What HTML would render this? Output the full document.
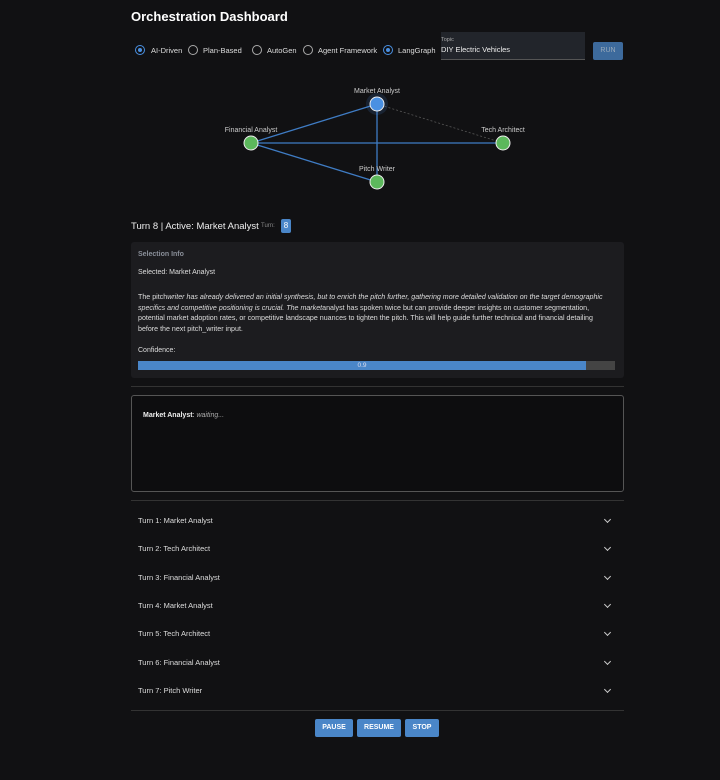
<!DOCTYPE html>
<html><head><meta charset="utf-8"><style>
*{margin:0;padding:0;box-sizing:border-box}
body{width:720px;height:780px;background:#111113;font-family:"Liberation Sans",sans-serif;color:#e6e6e6;position:relative;overflow:hidden}
.a{position:absolute;white-space:nowrap}
.r{position:absolute;width:10px;height:10px;border:1px solid #aaa;border-radius:50%;top:45px}
.r.on{border-color:#4a90e2}
.r.on::after{content:"";position:absolute;left:2px;top:2px;width:4px;height:4px;border-radius:50%;background:#4a90e2}
.lb{font-size:7.5px;top:46px;color:#ddd}
.acc{position:absolute;left:138px;font-size:7.5px;color:#ddd}
.chev{position:absolute;left:605px;width:5px;height:5px;border-right:1px solid #ccc;border-bottom:1px solid #ccc;transform:rotate(45deg)}
.btn{position:absolute;top:719px;height:18px;background:#4a86c8;color:#fff;font-size:7px;font-weight:bold;text-align:center;line-height:18px;border-radius:2px}
</style></head><body>
<div class="a" style="left:131px;top:9px;font-size:13px;font-weight:bold;color:#fff">Orchestration Dashboard</div>
<div class="r on" style="left:135px"></div><div class="a lb" style="left:151px">AI-Driven</div>
<div class="r" style="left:188px"></div><div class="a lb" style="left:203px">Plan-Based</div>
<div class="r" style="left:252px"></div><div class="a lb" style="left:267px">AutoGen</div>
<div class="r" style="left:303px"></div><div class="a lb" style="left:318px">Agent Framework</div>
<div class="r on" style="left:383px"></div><div class="a lb" style="left:398px">LangGraph</div>
<div class="a" style="left:441px;top:32px;width:144px;height:28px;background:#22252b;border-bottom:1px solid #555"></div>
<div class="a" style="left:441px;top:37px;font-size:5.5px;color:#aaa">Topic</div>
<div class="a" style="left:441px;top:45px;font-size:7.5px;color:#eee">DIY Electric Vehicles</div>
<div class="a" style="left:593px;top:42px;width:30px;height:18px;background:#3d6a9c;color:#9ab;font-size:7px;text-align:center;line-height:18px;border-radius:2px">RUN</div>
<svg class="a" style="left:0;top:0" width="720" height="200">
<line x1="377" y1="104" x2="503" y2="143" stroke="#555" stroke-width="0.8" stroke-dasharray="2,2"/>
<line x1="251" y1="143" x2="377" y2="104" stroke="#3f7cc4" stroke-width="1.3"/>
<line x1="251" y1="143" x2="503" y2="143" stroke="#3f7cc4" stroke-width="1.3"/>
<line x1="251" y1="143" x2="377" y2="182" stroke="#3f7cc4" stroke-width="1.3"/>
<line x1="377" y1="104" x2="377" y2="182" stroke="#3f7cc4" stroke-width="1.3"/>
<circle cx="377" cy="104" r="11" fill="#4a90e2" opacity="0.15"/>
<circle cx="377" cy="104" r="7" fill="#4a90e2" stroke="#eee" stroke-width="1"/>
<circle cx="251" cy="143" r="7" fill="#5cb85c" stroke="#eee" stroke-width="1"/>
<circle cx="503" cy="143" r="7" fill="#5cb85c" stroke="#eee" stroke-width="1"/>
<circle cx="377" cy="182" r="7" fill="#5cb85c" stroke="#eee" stroke-width="1"/>
<g font-family="Liberation Sans" font-size="7" fill="#ccc" text-anchor="middle">
<text x="377" y="93">Market Analyst</text><text x="251" y="132">Financial Analyst</text>
<text x="503" y="132">Tech Architect</text><text x="377" y="171">Pitch Writer</text></g>
</svg>
<div class="a" style="left:131px;top:221px;font-size:9.5px;color:#eee">Turn 8 | Active: Market Analyst</div>
<div class="a" style="left:261px;top:223px;font-size:6px;color:#888">Turn:</div>
<div class="a" style="left:281px;top:219px;width:10px;height:14px;background:#4a86c8;border-radius:2px;color:#fff;font-size:8px;text-align:center;line-height:14px">8</div>
<div class="a" style="left:131px;top:242px;width:493px;height:136px;background:#1c1c1f;border-radius:3px"></div>
<div class="a" style="left:138px;top:251px;font-size:7px;font-weight:bold;color:#8a8f99">Selection Info</div>
<div class="a" style="left:138px;top:269px;font-size:7px;color:#ddd">Selected: Market Analyst</div>
<div class="a" style="left:138px;top:292px;width:472px;font-size:7.1px;line-height:10.6px;color:#ddd;white-space:normal">The pitch<i>writer has already delivered an initial synthesis, but to enrich the pitch further, gathering more detailed validation on the target demographic specifics and competitive positioning is crucial. The market</i>analyst has spoken twice but can provide deeper insights on customer segmentation, potential market adoption rates, or competitive landscape nuances to tighten the pitch. This will help guide further technical and financial detailing before the next pitch_writer input.</div>
<div class="a" style="left:138px;top:347px;font-size:7px;color:#ddd">Confidence:</div>
<div class="a" style="left:138px;top:361px;width:477px;height:9px;background:#444"></div>
<div class="a" style="left:138px;top:361px;width:448px;height:9px;background:#4a86c8;color:#dde;font-size:6.5px;text-align:center;line-height:9px">0.9</div>
<div class="a" style="left:131px;top:386px;width:493px;height:1px;background:#333"></div>
<div class="a" style="left:131px;top:395px;width:493px;height:97px;border:1px solid #555;border-radius:3px;background:#0d0d0f"></div>
<div class="a" style="left:143px;top:412px;font-size:7px;color:#eee"><b>Market Analyst</b>: <i style="color:#aaa">waiting...</i></div>
<div class="a" style="left:131px;top:500px;width:493px;height:1px;background:#333"></div>
<div class="acc" style="top:516px">Turn 1: Market Analyst</div><div class="chev" style="top:517px"></div>
<div class="acc" style="top:544px">Turn 2: Tech Architect</div><div class="chev" style="top:545px"></div>
<div class="acc" style="top:573px">Turn 3: Financial Analyst</div><div class="chev" style="top:574px"></div>
<div class="acc" style="top:601px">Turn 4: Market Analyst</div><div class="chev" style="top:602px"></div>
<div class="acc" style="top:629px">Turn 5: Tech Architect</div><div class="chev" style="top:630px"></div>
<div class="acc" style="top:658px">Turn 6: Financial Analyst</div><div class="chev" style="top:659px"></div>
<div class="acc" style="top:686px">Turn 7: Pitch Writer</div><div class="chev" style="top:687px"></div>
<div class="a" style="left:131px;top:710px;width:493px;height:1px;background:#333"></div>
<div class="btn" style="left:315px;width:38px">PAUSE</div>
<div class="btn" style="left:357px;width:44px">RESUME</div>
<div class="btn" style="left:405px;width:34px">STOP</div>
</body></html>
